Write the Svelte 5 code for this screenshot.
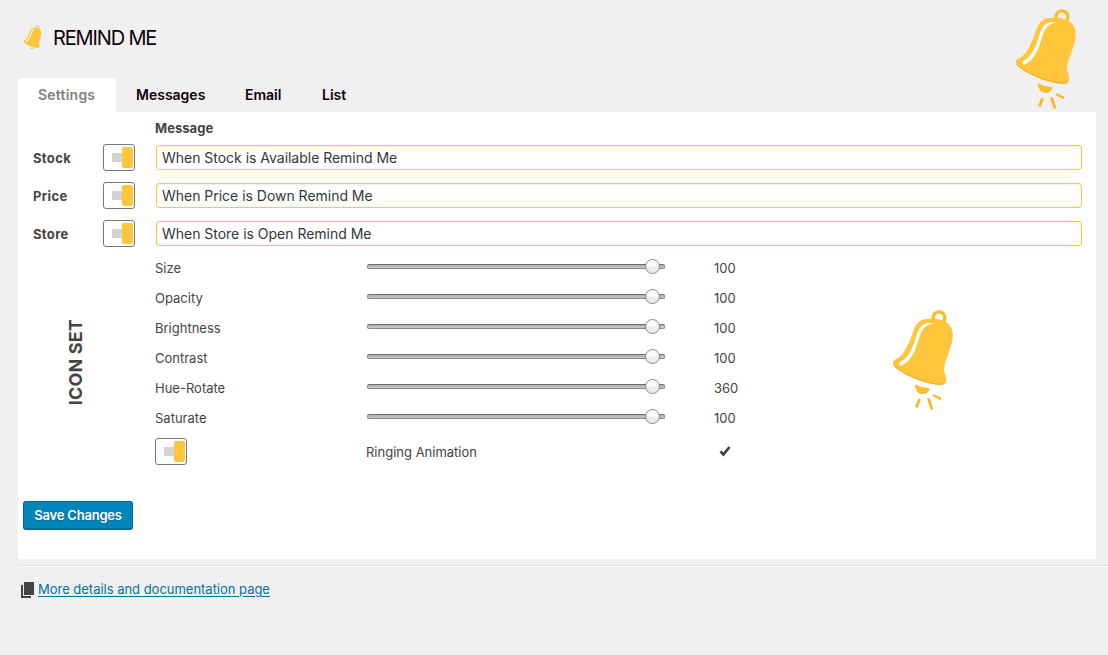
<script>
  const tabs = [
    { name: 'Settings', width: 98 },
    { name: 'Messages', width: 109 },
    { name: 'Email', width: 77 },
    { name: 'List', width: 65 }
  ];
  const messages = [
    { name: 'Stock', text: 'When Stock is Available Remind Me' },
    { name: 'Price', text: 'When Price is Down Remind Me' },
    { name: 'Store', text: 'When Store is Open Remind Me' }
  ];
  const sliders = [
    ['Size', 100],
    ['Opacity', 100],
    ['Brightness', 100],
    ['Contrast', 100],
    ['Hue-Rotate', 360],
    ['Saturate', 100]
  ];
</script>

{#snippet bell(cls, box)}
  <svg class={cls} viewBox={box} aria-hidden="true">
    <circle cx="186" cy="50" r="17.5" fill="none" stroke="#fdbb2b" stroke-width="10" />
    <path
      d="M48 187 C47 179 55 174 65 170 C86 154 97 122 106 98 C116 66 129 54 151 54 C164 50 188 53 201 60 C221 69 230 88 227 112 C224 142 204 174 201 207 C202 219 209 224 208 237 C207 249 198 252 187 252 C151 250 102 231 67 209 C56 202 49 195 48 187Z"
      fill="#ffc63b"
    />
    <path d="M50 193 C75 219 139 244 186 250 Q199 252 206 243" fill="none" stroke="#eda61c" stroke-width="2.5" />
    <path
      d="M169 67 C140 63 129 75 120 100 C108 140 94 174 67 185 C66 191 70 196 75 193 C108 177 119 136 128 106 C136 82 145 73 169 67Z"
      fill="#fff"
    />
    <path d="M114 250 Q135 261 158 262 C156 279 138 282 124 273 Q113 265 114 250Z" fill="#fdbd32" />
    <path d="M119 270 Q133 282 148 274" fill="none" stroke="#f0ab20" stroke-width="2.5" />
    <g fill="none" stroke="#fbb728" stroke-width="8.5" stroke-linecap="round">
      <path d="M127 297 119 316" />
      <path d="M155 295 164 322" />
      <path d="M172 284 189 293" stroke-width="7.5" />
    </g>
  </svg>
{/snippet}

{#snippet toggle()}
  <span class="toggle"><i></i><b></b></span>
{/snippet}

<div class="page">
  <header>
    {@render bell('mini', '42 22 190 242')}
    <h1>REMIND ME</h1>
  </header>
  {@render bell('corner', '0 0 324 360')}

  <nav>
    {#each tabs as tab, i}
      <span class="tab" class:active={i === 0} style:width="{tab.width}px">{tab.name}</span>
    {/each}
  </nav>

  <main>
    <div class="heading">Message</div>
    {#each messages as m}
      <div class="message">
        <strong>{m.name}</strong>
        {@render toggle()}
        <div class="field">{m.text}</div>
      </div>
    {/each}

    <section>
      <div class="side"><span>ICON SET</span></div>
      <div class="controls">
        {#each sliders as [name, value]}
          <div class="row">
            <span>{name}</span>
            <div class="track"><i></i></div>
            <span class="value">{value}</span>
          </div>
        {/each}
        <div class="row ringing">
          {@render toggle()}
          <span class="ring">Ringing Animation</span>
          <svg class="check" viewBox="0 0 12 12"><path d="M1.5 6.3 4.4 9.5 10.5 2" fill="none" stroke="#3c3c3c" stroke-width="2.6" /></svg>
        </div>
      </div>
      {@render bell('preview', '0 0 324 360')}
    </section>

    <button>Save Changes</button>
  </main>

  <footer>
    <svg viewBox="0 0 13 16"><path d="M3 0h10v13H3zM0 3h2v11h8v2H0z" fill="#444" /></svg>
    <a href="#docs">More details and documentation page</a>
  </footer>
</div>

<style>
  :global(body) { background: #f0f0f0; }
  .page {
    position: relative;
    width: 1108px;
    height: 655px;
    box-sizing: border-box;
    padding-left: 18px;
    overflow: hidden;
    color: #444;
    font: 13px/20px Inter, sans-serif;
  }
  header { display: flex; height: 78px; padding: 26px 0 0 6px; box-sizing: border-box; }
  .mini { width: 19px; height: 24px; margin: -1px 0 0 -1px; }
  h1 { margin: 0 0 0 11px; font: 400 20px/24px Inter, sans-serif; letter-spacing: -1.15px; color: #100008; }
  .corner { position: absolute; left: 1000px; top: 0; width: 108px; height: 120px; z-index: 1; }
  nav { display: flex; height: 34px; }
  .tab {
    box-sizing: border-box;
    padding-left: 20px;
    font: 600 14px/34px Inter, sans-serif;
    color: #100008;
    white-space: nowrap;
  }
  .active { background: #fff; color: #808080; border-radius: 3px 3px 0 0; letter-spacing: .22px; }
  main { width: 1078px; height: 447px; background: #fff; box-sizing: border-box; padding-top: 6px; }
  .heading { height: 20px; padding-left: 137px; font-weight: 700; letter-spacing: .05px; }
  .message { display: flex; align-items: center; height: 38px; padding: 0 14px 0 15px; }
  .message strong { width: 70px; padding-top: 1px; letter-spacing: .35px; }
  .toggle {
    display: flex;
    align-items: center;
    justify-content: flex-end;
    box-sizing: border-box;
    flex: none;
    width: 32px;
    height: 27px;
    padding-right: 1px;
    border: 1px solid #777;
    border-radius: 3px;
  }
  .toggle i { width: 10px; height: 9px; background: #d3d3d3; }
  .toggle b { width: 11px; height: 21px; border-radius: 2px; background: #ffc63b; }
  .field {
    flex: 1;
    box-sizing: border-box;
    height: 25px;
    margin-left: 21px;
    padding-left: 5px;
    border: 1px solid #ffc63b;
    border-radius: 3px;
    box-shadow: inset 0 1px 2px rgba(0, 0, 0, .07);
    font-size: 14px;
    line-height: 24px;
    letter-spacing: -.02px;
    color: #32373c;
  }
  section { display: flex; height: 218px; }
  .side { width: 137px; height: 217px; display: flex; align-items: center; justify-content: center; }
  .side span { writing-mode: vertical-rl; transform: rotate(180deg); font: 700 18px/22px Inter, sans-serif; letter-spacing: .15px; margin: 3px 22px 0 0; white-space: nowrap; }
  .controls { width: 720px; }
  .row { display: flex; align-items: center; height: 30px; }
  .row > span:first-child:not(.toggle) { width: 212px; padding-top: 1px; }
  .track {
    position: relative;
    width: 298px;
    height: 5px;
    margin-top: -2px;
    box-sizing: border-box;
    border: 1px solid #888;
    border-top-color: #707070;
    border-radius: 2px;
    background: linear-gradient(#aaa, #ccc);
  }
  .track i {
    position: absolute;
    left: 277px;
    top: -6px;
    width: 15px;
    height: 15px;
    box-sizing: border-box;
    border: 1px solid #888;
    border-radius: 50%;
    background: linear-gradient(#fafafa 0 48%, #ececec 52%);
  }
  .value { margin-left: 49px; padding-top: 1px; }
  .ringing { height: 37px; padding-top: 1px; }
  .ring { width: 353px; margin-left: 179px; padding-top: 1px; }
  .check { width: 12px; height: 12px; margin-top: -1px; }
  .preview { width: 108px; height: 120px; margin: 49px 0 0 2px; }
  button {
    display: block;
    width: 110px;
    height: 29px;
    margin: 31px 0 0 5px;
    padding: 0;
    border: 1px solid #006799;
    border-bottom-width: 2px;
    border-radius: 3px;
    background: #0085ba;
    color: #fff;
    font: 600 13px/26px Inter, sans-serif;
    letter-spacing: -.2px;
    text-shadow: 0 1px 1px #006799;
    white-space: nowrap;
  }
  footer {
    display: flex;
    height: 50px;
    margin-top: 6px;
    padding: 13px 0 0 3px;
    border-top: 1px solid #ddd;
    box-shadow: inset 0 1px #fafafa;
  }
  footer svg { width: 13px; height: 16px; margin: 3px 4px 0 0; }
  a { color: #0073aa; height: 20px; white-space: nowrap; text-underline-offset: 2px; letter-spacing: -.02px; }
</style>
